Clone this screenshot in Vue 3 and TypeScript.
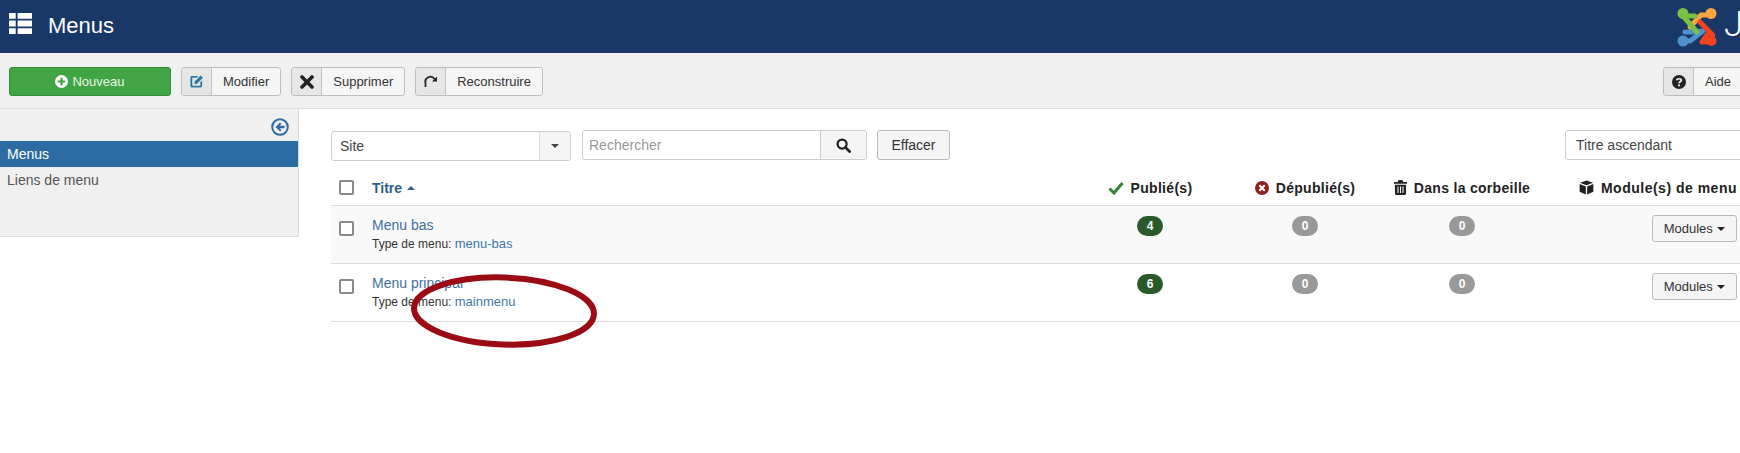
<script setup lang="ts">
interface MenuRow {
  title: string
  type: string
  published: number
}
const rows: MenuRow[] = [
  { title: 'Menu bas', type: 'menu-bas', published: 4 },
  { title: 'Menu principal', type: 'mainmenu', published: 6 },
]
</script>

<template>
  <div class="page">
    <header class="topbar">
      <svg class="grid-icon" viewBox="0 0 24 24" width="23" height="21" preserveAspectRatio="none">
        <path fill="#fff" d="M0 0h7v6.500H0zM9 0h15v6.500H9zM0 8.700h7v6.600H0zM9 8.700h15v6.600H9zM0 17.500h7V24H0zM9 17.500h15V24H9z" />
      </svg>
      <h1 class="page-title">Menus</h1>
      <div class="brand">
        <svg class="logo" viewBox="0 0 40 40" width="40" height="40" fill="none" stroke-width="5" stroke-linecap="round" stroke-linejoin="round">
          <g stroke="#5091cd" fill="#5091cd">
            <path fill="none" d="M8 25H14L26 24L13 34H6" />
            <circle cx="6" cy="34" r="5.500" stroke="none" />
          </g>
          <g stroke="#f9a541" fill="#f9a541">
            <path fill="none" d="M34 8H24L13 20" />
            <circle cx="34" cy="6.500" r="5.500" stroke="none" />
          </g>
          <g stroke="#f44321" fill="#f44321">
            <path fill="none" d="M23 15L35.500 28V32" />
            <path fill="none" d="M33 35H25L30 28" />
            <circle cx="34.500" cy="34" r="5" stroke="none" />
          </g>
          <g stroke="#7ac143" fill="#7ac143">
            <path fill="none" d="M18 9H6L20 25" />
            <circle cx="6" cy="6.500" r="5.500" stroke="none" />
          </g>
        </svg>
        <span class="wordmark">Joomla!</span>
      </div>
    </header>

    <nav class="toolbar">
      <button class="tb-new">
        <svg viewBox="0 0 14 14" width="13" height="13">
          <circle cx="7" cy="7" r="7" fill="#fff" />
          <path d="M7 3v8M3 7h8" stroke="#41a546" stroke-width="2.400" />
        </svg>
        Nouveau
      </button>
      <button class="tb-btn">
        <span class="tb-icon">
          <svg viewBox="0 0 16 16" width="15" height="15">
            <path fill="#2c7a9e" d="M2.500 2H10L8 4H3.500V12.500H12V9L14 7V12.500A2 2 0 0 1 12 14.500H3.500A2 2 0 0 1 1.500 12.500V4A2 2 0 0 1 2.500 2Z" />
            <path fill="#2c7a9e" d="M6 8L12.500 1.500L15 4L8.500 10.500L6 11Z" />
          </svg>
        </span>
        <span class="tb-text">Modifier</span>
      </button>
      <button class="tb-btn">
        <span class="tb-icon">
          <svg viewBox="0 0 14 14" width="14" height="14">
            <path d="M2 2L12 12M12 2L2 12" stroke="#222" stroke-width="3.600" stroke-linecap="round" />
          </svg>
        </span>
        <span class="tb-text">Supprimer</span>
      </button>
      <button class="tb-btn">
        <span class="tb-icon">
          <svg viewBox="0 0 14 14" width="14" height="14" fill="none">
            <path d="M1.500 12V8A5 5 0 0 1 10.500 4" stroke="#222" stroke-width="1.800" />
            <path d="M13 1.500V6.500H8Z" fill="#222" />
          </svg>
        </span>
        <span class="tb-text">Reconstruire</span>
      </button>
      <button class="tb-btn tb-help">
        <span class="tb-icon">
          <svg viewBox="0 0 14 14" width="14" height="14">
            <circle cx="7" cy="7" r="7" fill="#222" />
            <path d="M4.800 5.300C4.800 3.200 9.300 3.200 9.300 5.300C9.300 6.800 7 6.800 7 8.300" fill="none" stroke="#f0f0f0" stroke-width="1.700" />
            <path d="M6 9.500h2v1.800H6z" fill="#f0f0f0" />
          </svg>
        </span>
        <span class="tb-text">Aide</span>
      </button>
    </nav>

    <div class="body-row">
      <aside class="sidebar">
        <div class="collapse">
          <svg viewBox="0 0 18 18" width="18" height="18" fill="none">
            <circle cx="9" cy="9" r="7.800" stroke="#2d6ca2" stroke-width="2" />
            <path d="M9 4.500L4.500 9L9 13.500L10.500 12L8.500 10.200H13.500V7.800H8.500L10.500 6Z" fill="#2d6ca2" />
          </svg>
        </div>
        <a class="side-item active">Menus</a>
        <a class="side-item">Liens de menu</a>
      </aside>

      <main class="main">
        <div class="filters">
          <div class="select site">
            <span class="select-value">Site</span>
            <span class="select-caret"><i class="caret"></i></span>
          </div>
          <div class="search">
            <span class="placeholder">Rechercher</span>
            <span class="search-btn">
              <svg viewBox="0 0 16 16" width="15" height="15" fill="none">
                <circle cx="6.500" cy="6.500" r="4.800" stroke="#222" stroke-width="2.400" />
                <path d="M10 10L14.500 14.500" stroke="#222" stroke-width="3" stroke-linecap="round" />
              </svg>
            </span>
          </div>
          <button class="clear">Effacer</button>
          <div class="select sort">
            <span class="select-value">Titre ascendant</span>
          </div>
        </div>

        <div class="table">
          <div class="t-row t-head">
            <div class="c-check"><i class="checkbox"></i></div>
            <div class="c-title th-title">Titre <i class="caret-up"></i></div>
            <div class="c-num th">
              <svg viewBox="0 0 16 14" width="16" height="14" fill="none">
                <path d="M1.500 7.500L6 12L14.500 2" stroke="#378137" stroke-width="3" />
              </svg>
              Publié(s)
            </div>
            <div class="c-num th">
              <svg viewBox="0 0 14 14" width="14" height="14">
                <circle cx="7" cy="7" r="7" fill="#8f2020" />
                <path d="M4.300 4.300L9.700 9.700M9.700 4.300L4.300 9.700" stroke="#fff" stroke-width="2" />
              </svg>
              Dépublié(s)
            </div>
            <div class="c-num th">
              <svg viewBox="0 0 14 16" width="13" height="15">
                <path fill="#222" d="M5 0h4l1 2h4v2H0V2h4zM1 5h12v9.500a1.500 1.500 0 0 1-1.500 1.500h-9A1.500 1.500 0 0 1 1 14.500z" />
                <path d="M4.300 7v7M7 7v7M9.700 7v7" stroke="#fff" stroke-width="1.100" />
              </svg>
              Dans la corbeille
            </div>
            <div class="c-mod th mod-head">
              <svg viewBox="0 0 16 16" width="15" height="15">
                <path fill="#222" d="M8 .5L15 3L8 5.700L1 3z" />
                <path fill="#222" d="M.7 4.300L7.300 6.900V15.500L.7 12.500zM15.300 4.300L8.700 6.900V15.500L15.300 12.500z" />
              </svg>
              Module(s) de menu
            </div>
          </div>

          <div v-for="row in rows" :key="row.type" class="t-row item">
            <div class="c-check"><i class="checkbox row-box"></i></div>
            <div class="c-title">
              <a class="menu-link">{{ row.title }}</a>
              <div class="menu-type">Type de menu: <a class="type-link">{{ row.type }}</a></div>
            </div>
            <div class="c-num"><span class="badge ok">{{ row.published }}</span></div>
            <div class="c-num"><span class="badge">0</span></div>
            <div class="c-num"><span class="badge">0</span></div>
            <div class="c-mod">
              <button class="modules">Modules <i class="caret dark"></i></button>
            </div>
          </div>
        </div>
      </main>
    </div>

    <svg class="annotation" viewBox="0 0 190 78" width="190" height="78" fill="none">
      <ellipse cx="95" cy="39" rx="90" ry="33.500" stroke="#9b0b14" stroke-width="6" transform="rotate(2 95 39)" />
    </svg>
  </div>
</template>

<style>
body {
  background: #fff;
}
</style>

<style scoped>
.page {
  position: relative;
  width: 1740px;
  height: 453px;
  overflow: hidden;
  background: #fff;
  font-family: "Liberation Sans", Arial, sans-serif;
  font-size: 14px;
  color: #333;
}
button {
  font-family: inherit;
}
.topbar {
  display: flex;
  align-items: center;
  height: 53px;
  background: #1a3867;
  padding-left: 9px;
  box-sizing: border-box;
}
.grid-icon {
  flex: none;
  margin-bottom: 6px;
}
.page-title {
  margin: 0 0 2px 16px;
  color: #fff;
  font-size: 22px;
  font-weight: 400;
}
.brand {
  display: flex;
  align-items: center;
  margin-left: auto;
  width: 63px;
  overflow: hidden;
  flex: none;
}
.logo {
  flex: none;
}
.wordmark {
  flex: none;
  margin-left: 7px;
  margin-top: -4px;
  color: #fff;
  font-family: Roboto, "Liberation Sans", sans-serif;
  font-size: 35px;
  font-weight: 300;
  line-height: 40px;
}
.toolbar {
  display: flex;
  align-items: center;
  gap: 10px;
  height: 56px;
  box-sizing: border-box;
  padding: 2px 0 0 9px;
  background: #f0f0f0;
  border-bottom: 1px solid #ddd;
  font-size: 13px;
}
.tb-new {
  display: flex;
  align-items: center;
  justify-content: center;
  gap: 4px;
  width: 162px;
  height: 29px;
  padding: 0;
  color: #eaf5ea;
  font-size: 13px;
  background: #41a546;
  border: 1px solid #37893c;
  border-radius: 3px;
}
.tb-btn {
  display: flex;
  align-items: stretch;
  height: 29px;
  padding: 0;
  color: #333;
  font-size: 13px;
  background: #f5f5f5;
  border: 1px solid #bdbdbd;
  border-radius: 3px;
}
.tb-icon {
  display: flex;
  align-items: center;
  justify-content: center;
  width: 30px;
  box-sizing: border-box;
  background: #e6e6e6;
  border-right: 1px solid #c4c4c4;
  border-radius: 3px 0 0 3px;
}
.tb-text {
  display: flex;
  align-items: center;
  padding: 0 11px;
}
.tb-help {
  margin-left: auto;
  margin-right: -30px;
  width: 107px;
}
.body-row {
  display: flex;
  align-items: flex-start;
}
.sidebar {
  flex: none;
  width: 299px;
  height: 128px;
  box-sizing: border-box;
  background: #f0f0f0;
  border-right: 1px solid #ddd;
  border-bottom: 1px solid #ddd;
}
.collapse {
  display: flex;
  justify-content: flex-end;
  align-items: center;
  height: 32px;
  padding-right: 9px;
  padding-top: 4px;
  box-sizing: border-box;
}
.side-item {
  display: block;
  height: 26px;
  line-height: 26px;
  padding-left: 7px;
  color: #555;
}
.side-item.active {
  color: #fff;
  background: #2d6ca2;
}
.main {
  flex: 1;
  min-width: 0;
  padding: 21px 0 0 32px;
}
.filters {
  display: flex;
  align-items: flex-start;
  height: 40px;
}
.select {
  display: flex;
  align-items: stretch;
  height: 30px;
  box-sizing: border-box;
  background: #fff;
  border: 1px solid #ccc;
  border-radius: 3px;
  color: #444;
}
.site {
  width: 240px;
  margin-top: 1px;
}
.select-value {
  flex: 1;
  line-height: 28px;
  padding-left: 8px;
}
.sort .select-value {
  padding-left: 10px;
}
.select-caret {
  display: flex;
  align-items: center;
  justify-content: center;
  width: 30px;
  background: #f5f5f5;
  border-left: 1px solid #ddd;
  border-radius: 0 3px 3px 0;
}
.caret {
  display: inline-block;
  width: 0;
  height: 0;
  border-top: 4px solid #444;
  border-left: 4px solid transparent;
  border-right: 4px solid transparent;
}
.caret.dark {
  border-top-color: #222;
  margin-left: 1px;
  vertical-align: 2px;
}
.search {
  display: flex;
  align-items: stretch;
  width: 285px;
  height: 30px;
  margin-left: 11px;
  box-sizing: border-box;
  border: 1px solid #ccc;
  border-radius: 3px;
}
.placeholder {
  flex: 1;
  padding-left: 6px;
  line-height: 28px;
  color: #999;
}
.search-btn {
  display: flex;
  align-items: center;
  justify-content: center;
  width: 45px;
  background: #f5f5f5;
  border-left: 1px solid #ccc;
  border-radius: 0 3px 3px 0;
}
.clear {
  width: 73px;
  height: 30px;
  margin-left: 10px;
  padding: 0;
  color: #333;
  font-size: 14px;
  background: #f5f5f5;
  border: 1px solid #bbb;
  border-radius: 3px;
}
.sort {
  width: 190px;
  margin-left: auto;
  margin-right: -15px;
}
.t-row {
  display: grid;
  grid-template-columns: 41px 700px 156px 154px 160px 198px;
  box-sizing: border-box;
  border-bottom: 1px solid #ddd;
}
.t-head {
  height: 36px;
  align-items: center;
  font-weight: 700;
}
.item {
  height: 58px;
  padding-top: 9px;
  align-items: start;
}
.item:nth-child(2) {
  background: #f9f9f9;
}
.c-check {
  padding-left: 8px;
  display: flex;
}
.checkbox {
  display: block;
  width: 15px;
  height: 15px;
  box-sizing: border-box;
  background: #fff;
  border: 2px solid #8a8a8a;
  border-radius: 2px;
}
.row-box {
  margin-top: 6px;
}
.th-title {
  color: #2d5f8e;
}
.caret-up {
  display: inline-block;
  width: 0;
  height: 0;
  margin-left: 1px;
  vertical-align: 3px;
  border-bottom: 4px solid #2d5f8e;
  border-left: 4px solid transparent;
  border-right: 4px solid transparent;
}
.th {
  display: flex;
  align-items: center;
  justify-content: center;
  gap: 7px;
  color: #222;
  letter-spacing: 0.3px;
}
.c-num {
  text-align: center;
}
.c-mod {
  display: flex;
  justify-content: flex-end;
  padding-right: 3px;
}
.c-mod.th {
  justify-content: flex-end;
}
.mod-head {
  letter-spacing: 0.5px;
}
.menu-link {
  display: block;
  line-height: 20px;
  color: #3f6f9f;
}
.menu-type {
  font-size: 12px;
  line-height: 18px;
  color: #333;
}
.type-link {
  font-size: 13px;
  color: #3f78a8;
}
.badge {
  display: inline-block;
  width: 26px;
  height: 20px;
  margin-top: 1px;
  line-height: 20px;
  font-size: 12px;
  font-weight: 700;
  color: #fff;
  background: #999;
  border-radius: 10px;
}
.badge.ok {
  background: #2a5a2a;
}
.modules {
  width: 85px;
  height: 27px;
  padding: 0;
  color: #333;
  font-size: 13px;
  background: #f5f5f5;
  border: 1px solid #bbb;
  border-radius: 3px;
}
.annotation {
  position: absolute;
  left: 409px;
  top: 272px;
}
</style>
